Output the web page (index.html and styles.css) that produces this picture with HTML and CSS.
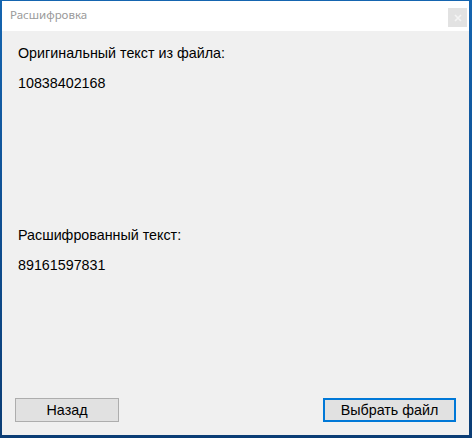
FILE: index.html
```html
<!DOCTYPE html>
<html lang="ru">
<head>
<meta charset="utf-8">
<title>Расшифровка</title>
<link rel="stylesheet" href="styles.css">
</head>
<body>
<div class="window">
  <div class="titlebar">
    <span class="title">Расшифровка</span>
    <span class="close"><svg width="8" height="8" viewBox="0 0 8 8"><path d="M1 1L7 7M7 1L1 7" stroke="#f4f4f4" stroke-width="1.6"/></svg></span>
  </div>
  <div class="content">
    <div class="label first">Оригинальный текст из файла:</div>
    <div class="value">10838402168</div>
    <div class="label second">Расшифрованный текст:</div>
    <div class="value">89161597831</div>
    <div class="buttons">
      <button class="btn">Назад</button>
      <button class="btn primary">Выбрать файл</button>
    </div>
  </div>
</div>
</body>
</html>
```

FILE: styles.css
```css
html, body {
  margin: 0;
  padding: 0;
  height: 100%;
}
body {
  background: linear-gradient(180deg, #1565b0 0%, #0f4f92 50%, #0b3d75 100%);
  font-family: "Liberation Sans", Arial, sans-serif;
  overflow: hidden;
}
.window {
  margin: 1px 3px 0 2px;
  height: calc(100% - 4px);
  background: #f0f0f0;
  display: flex;
  flex-direction: column;
}
.titlebar {
  height: 30px;
  background: #ffffff;
  display: flex;
  align-items: flex-start;
  justify-content: space-between;
  flex: none;
}
.title {
  font-family: "Noto Sans", "Liberation Sans", sans-serif;
  font-size: 11.5px;
  color: #9a9a9a;
  margin-left: 8px;
  line-height: 30px;
  margin-top: -1px;
}
.close {
  width: 19px;
  height: 19px;
  margin-top: 7px;
  margin-right: 2px;
  background: #e2e2e2;
  display: flex;
  align-items: center;
  justify-content: center;
}
.content {
  flex: 1;
  display: flex;
  flex-direction: column;
  padding: 14px 13px 13px 16px;
  font-size: 14.3px;
  color: #000;
}
.label, .value {
  line-height: 17px;
}
.value {
  margin-top: 13px;
}
.second {
  margin-top: 135px;
}
.buttons {
  margin-top: auto;
  margin-left: -3px;
  display: flex;
  justify-content: space-between;
}
.btn {
  font-family: "Liberation Sans", Arial, sans-serif;
  font-size: 14.3px;
  height: 24px;
  width: 104px;
  background: #e1e1e1;
  border: 1px solid #adadad;
  color: #000;
  padding: 0;
  margin: 0;
}
.btn.primary {
  width: 133px;
  border: 2px solid #0078d7;
}
```
